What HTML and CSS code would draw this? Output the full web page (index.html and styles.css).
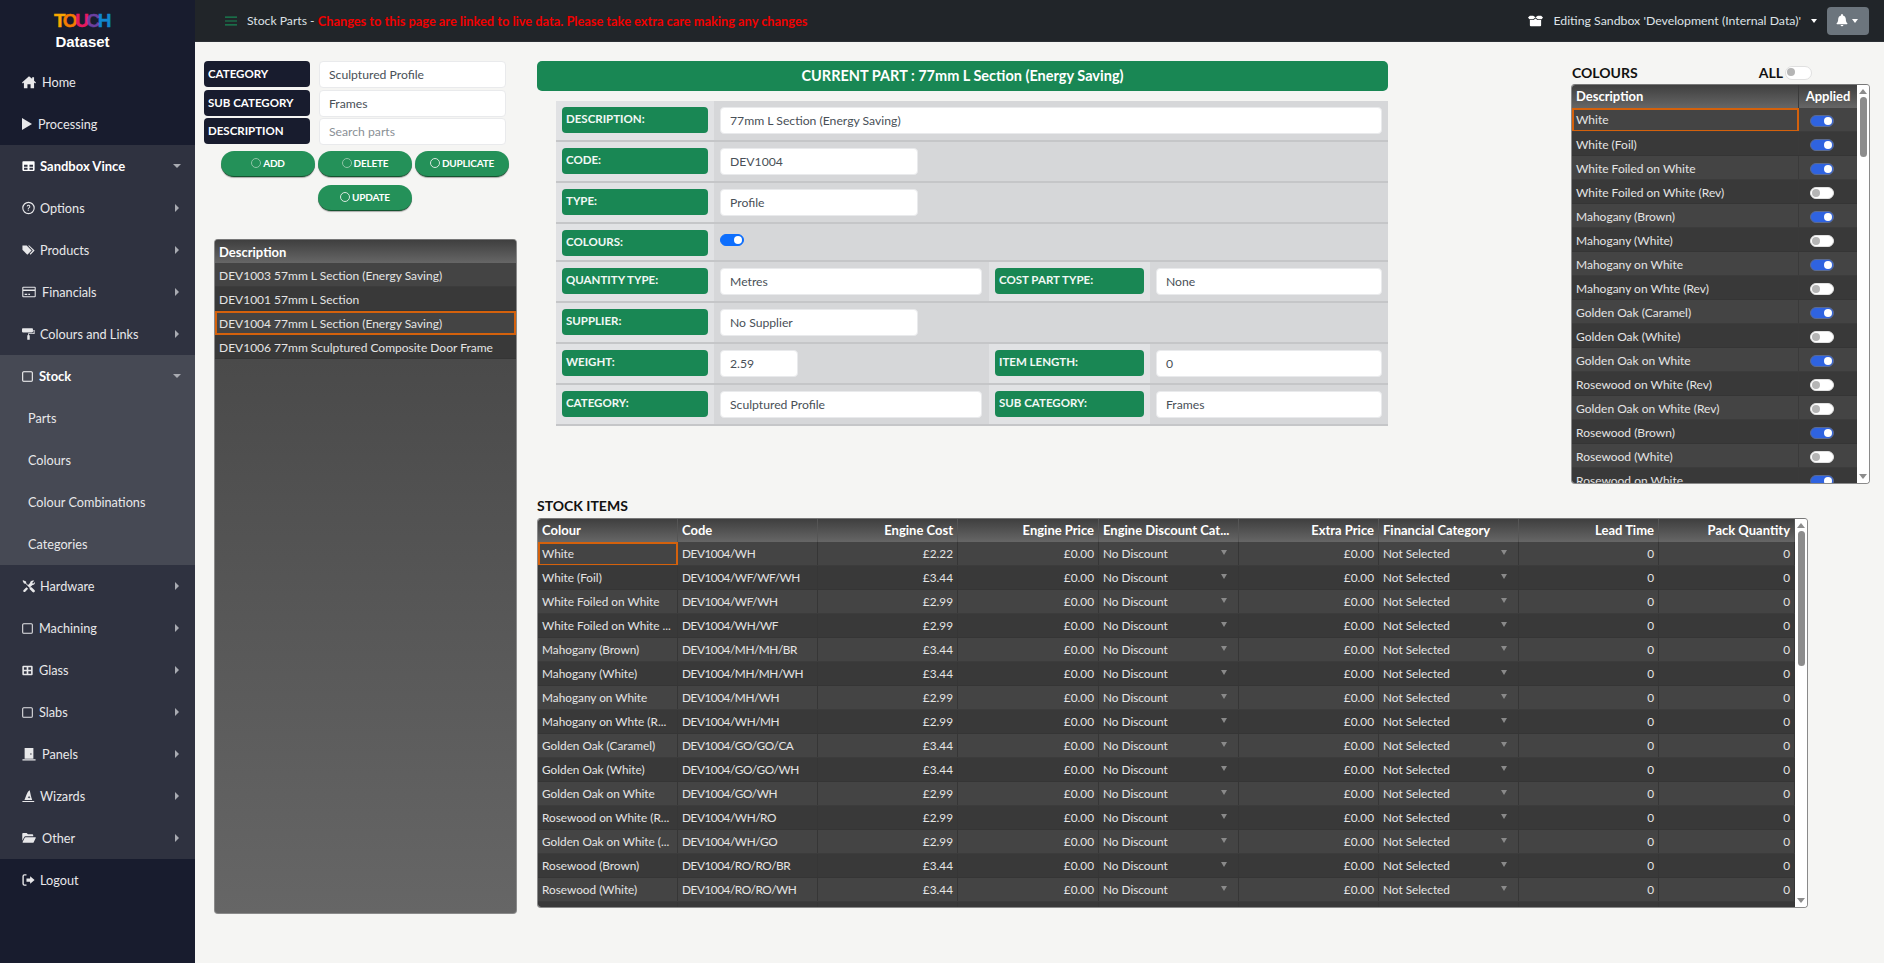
FILE: index.html
```html
<!DOCTYPE html>
<html lang="en">
<head>
    <meta charset="UTF-8">
    <meta name="viewport" content="width=device-width, initial-scale=1.0">
    <title>Stock Parts</title>
    <link rel="stylesheet" href="styles.css">
</head>
<body>
    <nav class="sidebar">
        <div class="brand">
            <div class="logo"><span class="l-t">T</span><span class="l-o">O</span><span class="l-u">U</span><span class="l-c">C</span><span class="l-h">H</span></div>
            <div class="brand-name">Dataset</div>
        </div>
        <a class="nav-item"><svg class="icon wide" viewBox="0 0 16 16"><path d="M8 1.5 0 8.5l1 1.2 1.2-1V15h4v-4.5h3.6V15h4V8.700l1.200 1 1-1.200-2.200-1.900V2.500h-2.200v1.700z"/></svg>Home</a>
        <a class="nav-item"><svg class="icon narrow" viewBox="0 0 10 14" preserveAspectRatio="none"><path d="M0 0v14l10-7z"/></svg>Processing</a>
        <div class="nav-group">
            <a class="nav-item bold"><svg class="icon" viewBox="0 0 16 16"><path fill-rule="evenodd" d="M1.500 2h13a1 1 0 0 1 1 1v10a1 1 0 0 1-1 1h-13a1 1 0 0 1-1-1V3a1 1 0 0 1 1-1zM2.500 6.500v2.300h4.300V6.500zm6.700 0v2.300h4.300V6.500zm-6.700 3.800V12.500h4.300v-2.200zm6.700 0V12.500h4.300v-2.200z"/></svg>Sandbox Vince<i class="caret down"></i></a>
            <a class="nav-item"><svg class="icon" viewBox="0 0 16 16"><circle cx="8" cy="8" r="7" fill="none" stroke="currentColor" stroke-width="1.400"/><path d="M5.800 6.200a2.200 2.200 0 1 1 3.300 1.900c-.7.4-.9.700-.9 1.300H7.100c0-1.100.4-1.600 1.200-2.100.5-.3.700-.6.700-1a1 1 0 0 0-2.100 0zM7.100 10.300h1.200v1.200H7.100z"/></svg>Options<i class="caret"></i></a>
            <a class="nav-item"><svg class="icon" viewBox="0 0 16 16"><path d="M.5 2.500h5.300l6 6-5.300 5.300-6-6z"/><path d="M7.500 2.500h1.500l6.500 6.200-5 5-1-1 3.800-4z"/></svg>Products<i class="caret"></i></a>
            <a class="nav-item"><svg class="icon wide" viewBox="0 0 16 16"><path fill-rule="evenodd" d="M1.500 2h13A1.200 1.200 0 0 1 15.700 3.200v9.600a1.200 1.200 0 0 1-1.200 1.200h-13A1.200 1.200 0 0 1 .3 12.800V3.200A1.200 1.200 0 0 1 1.500 2zm0 1.200V5h13V3.200zm0 3.600v6h13v-6zM3 10h3v1.300H3zm4.200 0h2v1.300h-2z"/></svg>Financials<i class="caret"></i></a>
            <a class="nav-item"><svg class="icon" viewBox="0 0 16 16"><path d="M1 1h11.500a1 1 0 0 1 1 1v3a1 1 0 0 1-1 1H1a1 1 0 0 1-1-1V2a1 1 0 0 1 1-1z"/><path d="M14 3h1.500v5H8.500v1.500h1V15h-3V9.500h1V7H14.300V4.200H14z"/></svg>Colours and Links<i class="caret"></i></a>
        </div>
        <div class="nav-group open">
            <a class="nav-item bold"><svg class="icon small" viewBox="0 0 16 16"><rect x="1" y="1" width="14" height="14" rx="1.500" fill="none" stroke="currentColor" stroke-width="1.500"/></svg>Stock<i class="caret down"></i></a>
            <a class="nav-item sub">Parts</a>
            <a class="nav-item sub">Colours</a>
            <a class="nav-item sub">Colour Combinations</a>
            <a class="nav-item sub">Categories</a>
        </div>
        <div class="nav-group">
            <a class="nav-item"><svg class="icon" viewBox="0 0 16 16"><path d="M1.500.8 5 2.600l.2 2 5 5 1.500-.2 3.600 3.600a1.500 1.500 0 0 1-2.300 2.300L9.300 11.700l.2-1.500-5-5-2-.2L.7 1.600z"/><path d="M15 1.500 12.800 3.700l.1 1.200 1.100.1L15.900 3.200c.3 1.700-.9 3.600-3 3.500L9.600 9.900 6.900 7.300l3-3C9.800 2.200 12.600.3 15 1.500zM5.500 9.400l2 2-3.500 3.600a1.400 1.400 0 0 1-2-2z"/></svg>Hardware<i class="caret"></i></a>
            <a class="nav-item"><svg class="icon small" viewBox="0 0 16 16"><rect x="1" y="1" width="14" height="14" rx="1.500" fill="none" stroke="currentColor" stroke-width="1.500"/></svg>Machining<i class="caret"></i></a>
            <a class="nav-item"><svg class="icon small" viewBox="0 0 16 16"><path fill-rule="evenodd" d="M2 1h12a1.500 1.500 0 0 1 1.500 1.500v11A1.500 1.500 0 0 1 14 15H2a1.500 1.500 0 0 1-1.500-1.500v-11A1.500 1.500 0 0 1 2 1zm.8 2.300v3.600h4V3.300zm6.400 0v3.600h4V3.300zM2.800 9.100v3.600h4V9.100zm6.400 0v3.600h4V9.100z"/></svg>Glass<i class="caret"></i></a>
            <a class="nav-item"><svg class="icon small" viewBox="0 0 16 16"><rect x="1" y="1" width="14" height="14" rx="1.500" fill="none" stroke="currentColor" stroke-width="1.500"/></svg>Slabs<i class="caret"></i></a>
            <a class="nav-item"><svg class="icon wide" viewBox="0 0 16 16"><path fill-rule="evenodd" d="M3 1h10v12.500H3zm7.200 6.200a.8.8 0 1 0 0 1.600.8.800 0 0 0 0-1.600zM.5 14h15v1.500H.5z"/></svg>Panels<i class="caret"></i></a>
            <a class="nav-item"><svg class="icon" viewBox="0 0 16 16"><path d="M9.500 1 11 8l1.500 5H3l2.500-6.500C6.300 4.300 7.800 2 9.500 1zM7 9.500l1.200.5.500 1.200.5-1.200 1.200-.5-1.200-.5L8.700 7.800 8.200 9zM.5 14h14.500v1.500H.5z"/></svg>Wizards<i class="caret"></i></a>
            <a class="nav-item"><svg class="icon wide" viewBox="0 0 16 16"><path d="M.3 3.200A1 1 0 0 1 1.300 2.200h4l1.500 1.500h5a1 1 0 0 1 1 1V6H4a1.800 1.800 0 0 0-1.600 1L.3 11zM4 7h11.200c.4 0 .7.500.5.900l-2.300 5c-.2.400-.5.600-.9.600H1.200c-.5 0-.7-.5-.5-.9L3.100 7.600C3.300 7.200 3.600 7 4 7z"/></svg>Other<i class="caret"></i></a>
        </div>
        <a class="nav-item"><svg class="icon" viewBox="0 0 16 16"><path d="M5.500 2.500H3a.8.800 0 0 0-.8.800v9.400c0 .4.400.8.800.8h2.500V15H3a2.600 2.600 0 0 1-2.500-2.500v-9A2.600 2.600 0 0 1 3 1h2.500z"/><path d="M10 3.500 15.500 8 10 12.500V10H5.500V6H10z"/></svg>Logout</a>
    </nav>

    <div class="main">
        <header class="topbar">
            <svg class="burger" viewBox="0 0 12 10"><path d="M0 .5h12v1.200H0zM0 4.400h12v1.200H0zM0 8.300h12v1.200H0z"/></svg>
            <span class="page-title">Stock Parts - </span>
            <span class="warning">Changes to this page are linked to live data. Please take extra care making any changes</span>
            <div class="top-right">
                <svg class="box-icon" viewBox="0 0 16 12"><path d="M2 .5h3.500L8 2 5.500 4H1.500L0 2.300zM14 .5h-3.500L8 2l2.500 2h4L16 2.300zM2 5h3.900L8 3.400 10.100 5H14v5.500a1 1 0 0 1-1 1H3a1 1 0 0 1-1-1z"/></svg>
                <span>Editing Sandbox 'Development (Internal Data)'</span>
                <i class="top-caret"></i>
                <button class="bell-btn"><svg viewBox="0 0 14 16"><path d="M7 0a1.200 1.200 0 0 1 1.200 1.200v.5C10.300 2.200 11.700 4 11.700 6.200c0 3.200.9 4.300 1.900 5.300.3.400.1 1-.5 1H.9c-.6 0-.8-.6-.5-1 1-1 1.900-2.100 1.900-5.300C2.300 4 3.700 2.200 5.800 1.700v-.5A1.200 1.200 0 0 1 7 0zM5.300 13.500h3.400a1.700 1.700 0 0 1-3.400 0z"/></svg><i class="top-caret"></i></button>
            </div>
        </header>

        <div class="content">
            <section class="left-col">
                <div class="filters">
                    <div class="filter-label">CATEGORY</div><div class="input">Sculptured Profile</div>
                    <div class="filter-label">SUB CATEGORY</div><div class="input">Frames</div>
                    <div class="filter-label">DESCRIPTION</div><div class="input placeholder">Search parts</div>
                </div>
                <div class="actions">
                    <button class="pill"><i class="ring q"></i>ADD</button>
                    <button class="pill"><i class="ring q"></i>DELETE</button>
                    <button class="pill"><i class="ring"></i>DUPLICATE</button>
                    <button class="pill"><i class="ring"></i>UPDATE</button>
                </div>
                <div class="parts-list grid">
                    <div class="grid-head">Description</div>
                    <div class="row">DEV1003 57mm L Section (Energy Saving)</div>
                    <div class="row alt">DEV1001 57mm L Section</div>
                    <div class="row selected">DEV1004 77mm L Section (Energy Saving)</div>
                    <div class="row alt">DEV1006 77mm Sculptured Composite Door Frame</div>
                </div>
            </section>

            <section class="part-form">
                <h2 class="part-title">CURRENT PART : 77mm L Section (Energy Saving)</h2>
                <div class="form-table">
                    <div class="form-row">
                        <div class="label-cell"><div class="green-label">DESCRIPTION:</div></div>
                        <div class="value-cell"><div class="input">77mm L Section (Energy Saving)</div></div>
                    </div>
                    <div class="form-row">
                        <div class="label-cell"><div class="green-label">CODE:</div></div>
                        <div class="value-cell"><div class="input w-mid">DEV1004</div></div>
                    </div>
                    <div class="form-row">
                        <div class="label-cell"><div class="green-label">TYPE:</div></div>
                        <div class="value-cell"><div class="input w-mid">Profile</div></div>
                    </div>
                    <div class="form-row short">
                        <div class="label-cell"><div class="green-label">COLOURS:</div></div>
                        <div class="value-cell top"><span class="switch on plain"></span></div>
                    </div>
                    <div class="form-row">
                        <div class="label-cell"><div class="green-label">QUANTITY TYPE:</div></div>
                        <div class="value-cell half"><div class="input">Metres</div></div>
                        <div class="label-cell second"><div class="green-label">COST PART TYPE:</div></div>
                        <div class="value-cell"><div class="input">None</div></div>
                    </div>
                    <div class="form-row">
                        <div class="label-cell"><div class="green-label">SUPPLIER:</div></div>
                        <div class="value-cell"><div class="input w-mid">No Supplier</div></div>
                    </div>
                    <div class="form-row">
                        <div class="label-cell"><div class="green-label">WEIGHT:</div></div>
                        <div class="value-cell half"><div class="input w-small">2.59</div></div>
                        <div class="label-cell second"><div class="green-label">ITEM LENGTH:</div></div>
                        <div class="value-cell"><div class="input">0</div></div>
                    </div>
                    <div class="form-row">
                        <div class="label-cell"><div class="green-label">CATEGORY:</div></div>
                        <div class="value-cell half"><div class="input">Sculptured Profile</div></div>
                        <div class="label-cell second"><div class="green-label">SUB CATEGORY:</div></div>
                        <div class="value-cell"><div class="input">Frames</div></div>
                    </div>
                </div>
            </section>

            <section class="colours">
                <div class="colours-top">
                    <h3 class="section-title">COLOURS</h3>
                    <div class="all-toggle"><h3 class="section-title">ALL</h3><span class="switch"></span></div>
                </div>
                <div class="grid scroller colours-grid">
                    <div class="grid-main">
                        <div class="grid-head cols-c"><span>Description</span><span class="center">Applied</span></div>
                        <div class="row cols-c"><span class="cell-selected">White</span><span class="center"><i class="switch on"></i></span></div>
                        <div class="row cols-c alt"><span>White (Foil)</span><span class="center"><i class="switch on"></i></span></div>
                        <div class="row cols-c"><span>White Foiled on White</span><span class="center"><i class="switch on"></i></span></div>
                        <div class="row cols-c alt"><span>White Foiled on White (Rev)</span><span class="center"><i class="switch"></i></span></div>
                        <div class="row cols-c"><span>Mahogany (Brown)</span><span class="center"><i class="switch on"></i></span></div>
                        <div class="row cols-c alt"><span>Mahogany (White)</span><span class="center"><i class="switch"></i></span></div>
                        <div class="row cols-c"><span>Mahogany on White</span><span class="center"><i class="switch on"></i></span></div>
                        <div class="row cols-c alt"><span>Mahogany on Whte (Rev)</span><span class="center"><i class="switch"></i></span></div>
                        <div class="row cols-c"><span>Golden Oak (Caramel)</span><span class="center"><i class="switch on"></i></span></div>
                        <div class="row cols-c alt"><span>Golden Oak (White)</span><span class="center"><i class="switch"></i></span></div>
                        <div class="row cols-c"><span>Golden Oak on White</span><span class="center"><i class="switch on"></i></span></div>
                        <div class="row cols-c alt"><span>Rosewood on White (Rev)</span><span class="center"><i class="switch"></i></span></div>
                        <div class="row cols-c"><span>Golden Oak on White (Rev)</span><span class="center"><i class="switch"></i></span></div>
                        <div class="row cols-c alt"><span>Rosewood (Brown)</span><span class="center"><i class="switch on"></i></span></div>
                        <div class="row cols-c"><span>Rosewood (White)</span><span class="center"><i class="switch"></i></span></div>
                        <div class="row cols-c alt"><span>Rosewood on White</span><span class="center"><i class="switch on"></i></span></div>
                    </div>
                    <div class="scrollbar"><i class="arrow-up"></i><i class="thumb thumb-c"></i><i class="arrow-down"></i></div>
                </div>
            </section>

            <section class="stock">
                <h3 class="section-title">STOCK ITEMS</h3>
                <div class="grid scroller stock-grid">
                    <div class="grid-main">
                        <div class="grid-head cols-s"><span>Colour</span><span>Code</span><span class="num">Engine Cost</span><span class="num">Engine Price</span><span>Engine Discount Cat...</span><span class="num">Extra Price</span><span>Financial Category</span><span class="num">Lead Time</span><span class="num">Pack Quantity</span></div>
                        <div class="row cols-s"><span class="cell-selected">White</span><span>DEV1004/WH</span><span class="num">£2.22</span><span class="num">£0.00</span><span class="drop">No Discount</span><span class="num">£0.00</span><span class="drop">Not Selected</span><span class="num">0</span><span class="num">0</span></div>
                        <div class="row cols-s alt"><span>White (Foil)</span><span>DEV1004/WF/WF/WH</span><span class="num">£3.44</span><span class="num">£0.00</span><span class="drop">No Discount</span><span class="num">£0.00</span><span class="drop">Not Selected</span><span class="num">0</span><span class="num">0</span></div>
                        <div class="row cols-s"><span>White Foiled on White</span><span>DEV1004/WF/WH</span><span class="num">£2.99</span><span class="num">£0.00</span><span class="drop">No Discount</span><span class="num">£0.00</span><span class="drop">Not Selected</span><span class="num">0</span><span class="num">0</span></div>
                        <div class="row cols-s alt"><span>White Foiled on White ...</span><span>DEV1004/WH/WF</span><span class="num">£2.99</span><span class="num">£0.00</span><span class="drop">No Discount</span><span class="num">£0.00</span><span class="drop">Not Selected</span><span class="num">0</span><span class="num">0</span></div>
                        <div class="row cols-s"><span>Mahogany (Brown)</span><span>DEV1004/MH/MH/BR</span><span class="num">£3.44</span><span class="num">£0.00</span><span class="drop">No Discount</span><span class="num">£0.00</span><span class="drop">Not Selected</span><span class="num">0</span><span class="num">0</span></div>
                        <div class="row cols-s alt"><span>Mahogany (White)</span><span>DEV1004/MH/MH/WH</span><span class="num">£3.44</span><span class="num">£0.00</span><span class="drop">No Discount</span><span class="num">£0.00</span><span class="drop">Not Selected</span><span class="num">0</span><span class="num">0</span></div>
                        <div class="row cols-s"><span>Mahogany on White</span><span>DEV1004/MH/WH</span><span class="num">£2.99</span><span class="num">£0.00</span><span class="drop">No Discount</span><span class="num">£0.00</span><span class="drop">Not Selected</span><span class="num">0</span><span class="num">0</span></div>
                        <div class="row cols-s alt"><span>Mahogany on Whte (R...</span><span>DEV1004/WH/MH</span><span class="num">£2.99</span><span class="num">£0.00</span><span class="drop">No Discount</span><span class="num">£0.00</span><span class="drop">Not Selected</span><span class="num">0</span><span class="num">0</span></div>
                        <div class="row cols-s"><span>Golden Oak (Caramel)</span><span>DEV1004/GO/GO/CA</span><span class="num">£3.44</span><span class="num">£0.00</span><span class="drop">No Discount</span><span class="num">£0.00</span><span class="drop">Not Selected</span><span class="num">0</span><span class="num">0</span></div>
                        <div class="row cols-s alt"><span>Golden Oak (White)</span><span>DEV1004/GO/GO/WH</span><span class="num">£3.44</span><span class="num">£0.00</span><span class="drop">No Discount</span><span class="num">£0.00</span><span class="drop">Not Selected</span><span class="num">0</span><span class="num">0</span></div>
                        <div class="row cols-s"><span>Golden Oak on White</span><span>DEV1004/GO/WH</span><span class="num">£2.99</span><span class="num">£0.00</span><span class="drop">No Discount</span><span class="num">£0.00</span><span class="drop">Not Selected</span><span class="num">0</span><span class="num">0</span></div>
                        <div class="row cols-s alt"><span>Rosewood on White (R...</span><span>DEV1004/WH/RO</span><span class="num">£2.99</span><span class="num">£0.00</span><span class="drop">No Discount</span><span class="num">£0.00</span><span class="drop">Not Selected</span><span class="num">0</span><span class="num">0</span></div>
                        <div class="row cols-s"><span>Golden Oak on White (...</span><span>DEV1004/WH/GO</span><span class="num">£2.99</span><span class="num">£0.00</span><span class="drop">No Discount</span><span class="num">£0.00</span><span class="drop">Not Selected</span><span class="num">0</span><span class="num">0</span></div>
                        <div class="row cols-s alt"><span>Rosewood (Brown)</span><span>DEV1004/RO/RO/BR</span><span class="num">£3.44</span><span class="num">£0.00</span><span class="drop">No Discount</span><span class="num">£0.00</span><span class="drop">Not Selected</span><span class="num">0</span><span class="num">0</span></div>
                        <div class="row cols-s"><span>Rosewood (White)</span><span>DEV1004/RO/RO/WH</span><span class="num">£3.44</span><span class="num">£0.00</span><span class="drop">No Discount</span><span class="num">£0.00</span><span class="drop">Not Selected</span><span class="num">0</span><span class="num">0</span></div>
                        <div class="row cols-s alt"><span></span><span></span><span></span><span></span><span></span><span></span><span></span><span></span><span></span></div>
                    </div>
                    <div class="scrollbar"><i class="arrow-up"></i><i class="thumb thumb-s"></i><i class="arrow-down"></i></div>
                </div>
            </section>
        </div>
    </div>
</body>
</html>
```

FILE: styles.css
```css
* {
    box-sizing: border-box;
}

body {
    display: flex;
    height: 100vh;
    margin: 0;
    overflow: hidden;
    font-family: Lato, "Noto Sans", Arial, sans-serif;
    font-size: 12.200px;
    background-color: #f5f5f3;
    color: #212529;
}

/* sidebar */
.sidebar {
    width: 195px;
    flex-shrink: 0;
    background-color: #181c2e;
    color: #e8e8ea;
    font-size: 12.700px;
}

.brand {
    width: 165px;
    height: 61px;
    padding-top: 12px;
    text-align: center;
}

.logo {
    height: 17px;
    font-family: "Liberation Sans", Arial, sans-serif;
    font-weight: bold;
    font-size: 19px;
    line-height: 17px;
    letter-spacing: -2.400px;
    padding-right: 2px;
    -webkit-text-stroke: 0.4px;
}

.l-t { color: #f9a800; }
.l-o { color: #f57c00; }
.l-u { color: #e5195f; }
.l-c { color: #6b3fa0; }
.l-h { color: #0f86cf; }

.brand-name {
    margin-top: 4px;
    font-family: "Liberation Sans", Arial, sans-serif;
    font-weight: bold;
    font-size: 15px;
    color: #fff;
}

.nav-item {
    display: flex;
    align-items: center;
    height: 42px;
    padding-left: 22px;
    padding-right: 16px;
}

.nav-item.bold {
    font-size: 13px;
    font-weight: bold;
    color: #fff;
}

.nav-item.sub {
    padding-left: 28px;
}

.nav-group {
    background-color: #2f3240;
}

.nav-group.open {
    background-color: #464954;
}

.icon {
    width: 13px;
    height: 14px;
    margin-right: 5px;
    fill: currentColor;
}

.icon.small {
    width: 11px;
    height: 11px;
    margin-right: 6px;
}

.icon.wide {
    width: 14px;
    margin-right: 6px;
}

.icon.narrow {
    width: 10px;
    height: 12px;
    margin-right: 6px;
}

.caret {
    margin-left: auto;
    border-top: 4px solid transparent;
    border-bottom: 4px solid transparent;
    border-left: 4px solid #a9abb2;
}

.caret.down {
    margin-right: -2px;
    border-left: 4px solid transparent;
    border-right: 4px solid transparent;
    border-top: 4px solid #a9abb2;
    border-bottom: none;
}

/* top bar */
.main {
    flex: 1;
    min-width: 0;
}

.topbar {
    display: flex;
    align-items: center;
    height: 42px;
    padding-left: 30px;
    background-color: #212529;
    border-bottom: 1px solid #2c3035;
    color: #dee2e6;
}

.burger {
    width: 12px;
    height: 10px;
    margin-right: 10px;
    fill: #198754;
}

.page-title {
    white-space: pre;
}

.warning {
    color: #f00000;
    font-size: 12.800px;
    font-weight: bold;
}

.top-right {
    display: flex;
    align-items: center;
    margin-left: auto;
    margin-right: 15px;
    font-size: 12.300px;
}

.box-icon {
    width: 15px;
    height: 12px;
    margin-right: 10px;
    fill: #fff;
}

.top-caret {
    display: inline-block;
    margin-left: 10px;
    border-left: 3.500px solid transparent;
    border-right: 3.500px solid transparent;
    border-top: 4px solid #fff;
}

.bell-btn {
    display: flex;
    align-items: center;
    height: 28px;
    width: 42px;
    margin-left: 10px;
    padding: 0 0 0 9px;
    background-color: #6c757d;
    border: none;
    border-radius: 4px;
}

.bell-btn svg {
    width: 12px;
    height: 13px;
    fill: #fff;
}

.bell-btn .top-caret {
    margin-left: 4px;
}

/* page layout */
.content {
    display: grid;
    grid-template-columns: 333px 851px 1fr;
    grid-template-rows: 435px 1fr;
    padding: 19px 14px 0 9px;
}

.left-col {
    grid-row: 1 / 3;
}

/* filters and buttons */
.filters {
    display: grid;
    grid-template-columns: 106px 187px;
    grid-auto-rows: 28.500px;
    column-gap: 9px;
}

.filter-label {
    height: 26px;
    padding-left: 4px;
    line-height: 25px;
    background-color: #181c2e;
    border-radius: 4px;
    color: #fff;
    font-size: 11.500px;
    font-weight: bold;
}

.input {
    height: 27px;
    padding-left: 9px;
    line-height: 25px;
    background-color: #fff;
    border: 1px solid #e9eaec;
    border-radius: 4px;
    color: #495057;
}

.filters .input {
    line-height: 26px;
}

.placeholder {
    color: #8a9096;
}

.actions {
    display: flex;
    flex-wrap: wrap;
    justify-content: center;
    gap: 8px 3px;
    width: 322px;
    margin-top: 4px;
}

.pill {
    display: flex;
    align-items: center;
    justify-content: center;
    width: 94px;
    height: 26px;
    padding: 0;
    background-color: #249159;
    border: none;
    border-bottom: 1px solid #14532f;
    border-radius: 13px;
    box-shadow: 0 1px 1px rgba(0, 0, 0, 0.3);
    color: #fff;
    font-family: Lato, "Noto Sans", Arial, sans-serif;
    font-size: 10px;
    font-weight: bold;
    letter-spacing: -0.2px;
}

.ring {
    width: 10px;
    height: 10px;
    margin-right: 2px;
    border: 1px solid #d8e8df;
    border-radius: 50%;
}

.ring.q {
    border-color: #8ec4a6;
}

/* dark grids */
.grid {
    background-color: #444;
    border: 1px solid #8a8a8a;
    border-top-color: #777;
    border-radius: 4px;
    color: #e4e4e4;
    font-size: 12px;
}

.grid-head {
    height: 23px;
    padding-left: 4px;
    font-size: 13px;
    line-height: 24px;
    background: linear-gradient(to bottom, #3f3f3f, #666);
    color: #fff;
    font-weight: bold;
}

.grid-head.cols-c,
.grid-head.cols-s {
    line-height: 22px;
}

.row {
    height: 24px;
    padding-left: 4px;
    line-height: 26px;
    background: #444;
    border-bottom: 1px solid #3c3c3c;
    white-space: nowrap;
    overflow: hidden;
}

.row.alt {
    background: #393939;
    border-bottom-color: #353535;
}

.row.selected {
    border: 2px solid #d4610c;
    padding-left: 2px;
    line-height: 21px;
}

.parts-list {
    width: 303px;
    height: 675px;
    margin-top: 28px;
    margin-left: 10px;
    background: linear-gradient(to bottom, #444, #666);
    overflow: hidden;
}

/* current part form */
.part-title {
    height: 30px;
    margin: 0 0 10px 0;
    background-color: #198754;
    border-radius: 5px;
    color: #fff;
    font-size: 14.500px;
    font-weight: bold;
    line-height: 30px;
    text-align: center;
}

.form-table {
    margin-left: 19px;
}

.form-row {
    display: flex;
    height: 41px;
    border-bottom: 2px solid #c5c6c8;
    background-color: #d6d7d9;
}

.form-row.short {
    height: 38px;
}

.label-cell {
    width: 158px;
    flex-shrink: 0;
    padding: 6px 6px 0 6px;
    background-color: #e1e2e4;
}

.label-cell.second {
    width: 161px;
}

.green-label {
    height: 26px;
    padding-left: 4px;
    background-color: #198754;
    border-radius: 4px;
    color: #f2f8f5;
    font-size: 11.500px;
    font-weight: bold;
    line-height: 24px;
    white-space: nowrap;
}

.value-cell {
    flex: 1;
    padding: 6px 6px 0 6px;
}

.value-cell.half {
    flex: none;
    width: 275px;
    padding-right: 7px;
}

.value-cell.top {
    padding-top: 10px;
}

.w-mid {
    width: 198px;
}

.w-small {
    width: 78px;
}

/* switches */
.switch {
    display: inline-block;
    position: relative;
    width: 24px;
    height: 12px;
    background-color: #fff;
    border-radius: 6px;
    border: 1px solid #e0e0e0;
    vertical-align: middle;
}

.switch::after {
    content: "";
    position: absolute;
    left: 1px;
    top: 1px;
    width: 8px;
    height: 8px;
    background-color: #b5b5b5;
    border-radius: 50%;
}

.switch.on {
    background-color: #2f63e0;
    border-color: #5a6a90;
}

.switch.on.plain {
    background-color: #0d6efd;
    border-color: #0d6efd;
    display: block;
}

.switch.on::after {
    left: auto;
    right: 1px;
    background-color: #fff;
}

/* colours panel */
.colours {
    padding-left: 183px;
}

.colours-top {
    display: flex;
    justify-content: space-between;
    align-items: center;
    width: 241px;
    padding-left: 1px;
    height: 23px;
}

.all-toggle {
    display: flex;
    align-items: center;
    gap: 2px;
}

.all-toggle .switch {
    width: 27px;
    height: 14px;
    border-radius: 7px;
}

.section-title {
    margin: 0;
    font-size: 14px;
    font-weight: bold;
    color: #111;
}

.scroller {
    display: flex;
    background-color: #fff;
    overflow: hidden;
}

.grid-main {
    flex: 1;
    min-width: 0;
    overflow: hidden;
}

.colours-grid {
    width: 299px;
    height: 400px;
}

.scrollbar {
    display: flex;
    flex-direction: column;
    align-items: center;
    width: 12px;
    flex-shrink: 0;
    padding: 4px 0;
    background-color: #fff;
}

.thumb {
    width: 7px;
    background-color: #8c8c8c;
    border-radius: 4px;
    margin-top: 3px;
}

.thumb-c {
    height: 60px;
}

.thumb-s {
    height: 135px;
}

.arrow-up {
    border-left: 4px solid transparent;
    border-right: 4px solid transparent;
    border-bottom: 5px solid #8c8c8c;
}

.arrow-down {
    margin-top: auto;
    border-left: 4px solid transparent;
    border-right: 4px solid transparent;
    border-top: 5px solid #8c8c8c;
}

.cols-c {
    display: grid;
    grid-template-columns: 227px 1fr;
    padding-left: 0;
}

.row.cols-c {
    line-height: 25px;
}

.cols-c > span:first-child {
    padding-left: 4px;
    border-right: 1px solid #3a3a3a;
}

.center {
    text-align: center;
}

.row .center {
    padding-right: 12px;
    line-height: 23px;
}

/* stock table */
.stock .section-title {
    height: 22px;
    line-height: 20px;
}

.stock-grid {
    width: 1271px;
    height: 390px;
}

.cols-s {
    display: grid;
    grid-template-columns: 140px 140px 140px 141px 140px 140px 140px 140px 1fr;
    padding-left: 0;
}

.row.cols-s {
    font-size: 11.800px;
    line-height: 24px;
}

.cols-s > span {
    position: relative;
    padding: 0 4px;
    border-right: 1px solid #363636;
    overflow: hidden;
    white-space: nowrap;
}

.row.cols-s > span:nth-child(2) {
    letter-spacing: -0.45px;
}

.grid-head.cols-s > span {
    border-right-color: #555;
}

.num {
    text-align: right;
}

.drop::after {
    content: "";
    position: absolute;
    right: 11px;
    top: 8px;
    border-left: 3px solid transparent;
    border-right: 3px solid transparent;
    border-top: 5px solid #8a8a8a;
}

.row .cell-selected,
.row.cols-c > .cell-selected {
    height: 24px;
    padding-left: 2px;
    border: 2px solid #d4610c;
    line-height: 20px;
}
```
